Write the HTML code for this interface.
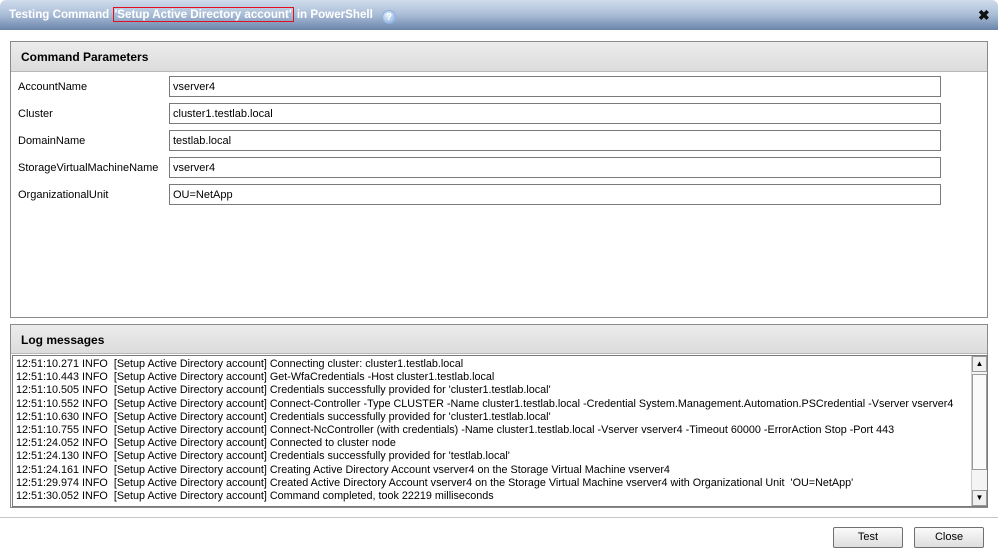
<!DOCTYPE html>
<html><head><style>
*{margin:0;padding:0;box-sizing:border-box}
body{width:998px;height:555px;background:#fff;font-family:"Liberation Sans",Tahoma,sans-serif;font-size:11px;color:#000;position:relative;overflow:hidden}
.title{position:absolute;left:0;top:0;width:998px;height:30px;background:linear-gradient(#d0dcec,#a9bcd6 50%,#6a84aa);border-radius:6px 6px 0 0}
.title .t{position:absolute;left:9px;top:8px;color:#fff;font-weight:bold;font-size:11.6px;white-space:nowrap}
.title .hl{border:1px solid #e01020;padding:0 1px}
.help{display:inline-block;width:14px;height:14px;border-radius:50%;background:radial-gradient(circle at 40% 35%,#e8f2ff,#7aa6d8);color:#fff;font-size:10px;text-align:center;line-height:13px;margin-left:6px;vertical-align:-2px;border:1px solid #8fb0d8}
.x{position:absolute;left:978px;top:7px;font-weight:bold;font-size:14px;color:#111}
.panel{position:absolute;border:1px solid #8a8a8a;background:#fff}
.ph{height:30px;background:linear-gradient(#ececec,#dcdcdc);border-bottom:1px solid #b8b8b8;font-weight:bold;font-size:12px;padding:8px 0 0 10px}
.lab{position:absolute;left:7px}
.in{position:absolute;left:158px;width:772px;height:21px;border:1px solid #7a7a7a;padding:4px 0 0 3px}
.log{position:absolute;left:1px;top:30px;width:976px;height:152px;border:1px solid #7a7a7a;overflow:hidden;padding-top:2px;font-size:10.8px}
.log .r{height:13.2px;line-height:13px;padding-left:3px;white-space:nowrap}
.sb{position:absolute;right:0;top:0;width:16px;height:150px;background:#f4f4f4;border-left:1px solid #ccc}
.sb .a{position:absolute;left:0;width:15px;height:16px;border:1px solid #9a9a9a;background:#f0f0f0;font-size:8px;text-align:center;line-height:14px}
.sb .th{position:absolute;left:0;top:18px;width:15px;height:96px;border:1px solid #9a9a9a;background:#fafafa}
.sep{position:absolute;left:0;top:517px;width:998px;height:1px;background:#c8c8c8}
.btn{position:absolute;top:527px;width:70px;height:21px;border:1px solid #707070;border-radius:2px;background:linear-gradient(#fafafa,#dedede);text-align:center;line-height:19px}
</style></head><body>
<div class="title"><div class="t">Testing Command <span class="hl">'Setup Active Directory account'</span> in PowerShell <span class="help">?</span></div><div class="x">✖</div></div>
<div class="panel" style="left:10px;top:41px;width:978px;height:277px">
<div class="ph">Command Parameters</div>
<div class="lab" style="top:39px">AccountName</div><div class="in" style="top:34px">vserver4</div>
<div class="lab" style="top:66px">Cluster</div><div class="in" style="top:61px">cluster1.testlab.local</div>
<div class="lab" style="top:93px">DomainName</div><div class="in" style="top:88px">testlab.local</div>
<div class="lab" style="top:120px">StorageVirtualMachineName</div><div class="in" style="top:115px">vserver4</div>
<div class="lab" style="top:147px">OrganizationalUnit</div><div class="in" style="top:142px">OU=NetApp</div>
</div>
<div class="panel" style="left:10px;top:324px;width:978px;height:184px">
<div class="ph" style="height:29px">Log messages</div>
<div class="log">
<div class="r">12:51:10.271 INFO&nbsp; [Setup Active Directory account] Connecting cluster: cluster1.testlab.local</div>
<div class="r">12:51:10.443 INFO&nbsp; [Setup Active Directory account] Get-WfaCredentials -Host cluster1.testlab.local</div>
<div class="r">12:51:10.505 INFO&nbsp; [Setup Active Directory account] Credentials successfully provided for 'cluster1.testlab.local'</div>
<div class="r">12:51:10.552 INFO&nbsp; [Setup Active Directory account] Connect-Controller -Type CLUSTER -Name cluster1.testlab.local -Credential System.Management.Automation.PSCredential -Vserver vserver4</div>
<div class="r">12:51:10.630 INFO&nbsp; [Setup Active Directory account] Credentials successfully provided for 'cluster1.testlab.local'</div>
<div class="r">12:51:10.755 INFO&nbsp; [Setup Active Directory account] Connect-NcController (with credentials) -Name cluster1.testlab.local -Vserver vserver4 -Timeout 60000 -ErrorAction Stop -Port 443</div>
<div class="r">12:51:24.052 INFO&nbsp; [Setup Active Directory account] Connected to cluster node</div>
<div class="r">12:51:24.130 INFO&nbsp; [Setup Active Directory account] Credentials successfully provided for 'testlab.local'</div>
<div class="r">12:51:24.161 INFO&nbsp; [Setup Active Directory account] Creating Active Directory Account vserver4 on the Storage Virtual Machine vserver4</div>
<div class="r">12:51:29.974 INFO&nbsp; [Setup Active Directory account] Created Active Directory Account vserver4 on the Storage Virtual Machine vserver4 with Organizational Unit&nbsp; 'OU=NetApp'</div>
<div class="r">12:51:30.052 INFO&nbsp; [Setup Active Directory account] Command completed, took 22219 milliseconds</div>
<div class="sb"><div class="a" style="top:0">▲</div><div class="th"></div><div class="a" style="bottom:0">▼</div></div>
</div>
</div>
<div class="sep"></div>
<div class="btn" style="left:833px">Test</div>
<div class="btn" style="left:914px">Close</div>
</body></html>
